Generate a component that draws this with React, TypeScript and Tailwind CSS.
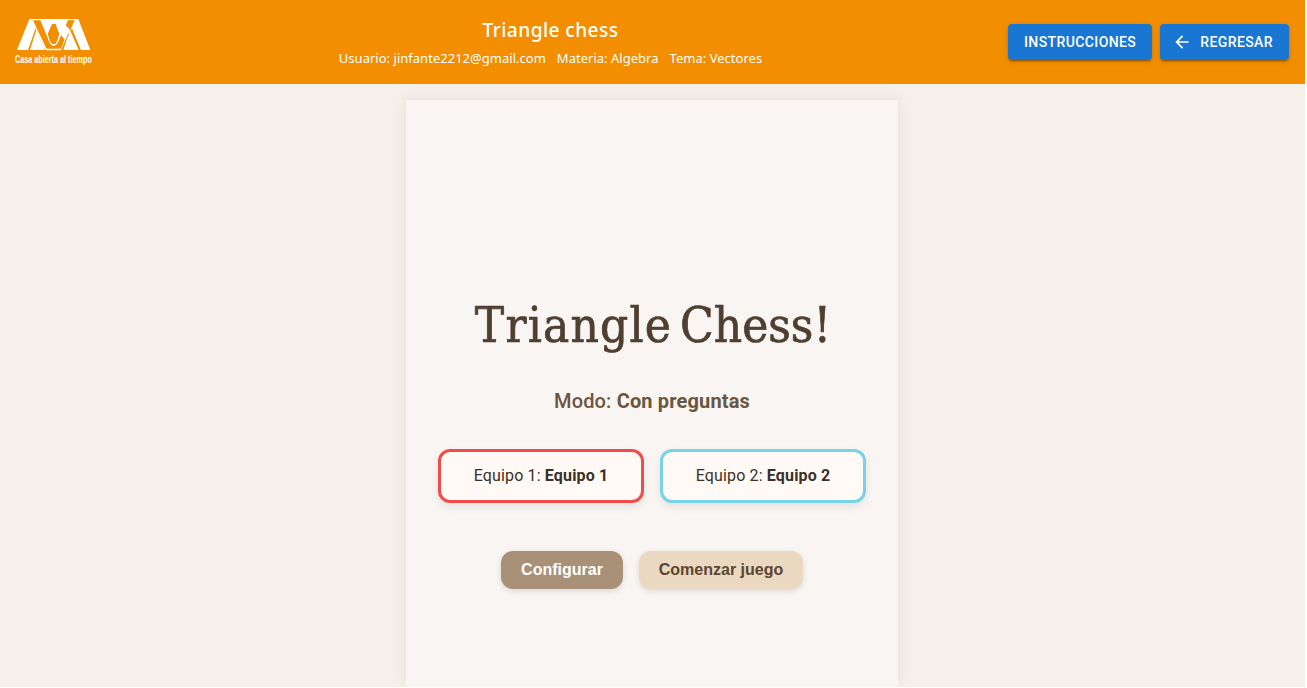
import React from "react";

function Logo() {
  return (
    <svg className="h-14 w-20 overflow-visible" viewBox="42 42 240 168" role="img" aria-label="Casa abierta al tiempo">
      <g fill="#fff">
        <path d="M88 57H99L109 79L84 150H51Z" />
        <path d="M109 91L135 150H90L100 118Z" />
        <path d="M92 57H232V62H222L188 144L182 151H140L132 144L97 62H92Z" />
        <path d="M222 57H235L271 150H242L212 84Z" />
        <path d="M210 90L236 150H190Z" />
      </g>
      <g fill="#f28e00">
        <path d="M99 61H121L147 122Q153 137 161 137Q170 137 176 122L183 106L194 118L184 144L181 146H142L138 143Z" />
        <path d="M204 61H224L211 90L197 76Z" />
        <path d="M156 71H167L178 101Q172 126 166 132H156Q148 124 143 101Z" />
      </g>
      <path d="M184 78L206 122" stroke="#fff" strokeWidth="13" />
      <path d="M206 101L186 147" stroke="#f28e00" strokeWidth="3" />
      <path d="M215 88L240 149" stroke="#f28e00" strokeWidth="4" />
      <path d="M155 69H168L180 101Q174 128 167 134H155Q147 126 141 101Z" fill="none" stroke="#fff" strokeWidth="3" />
      <text transform="translate(45 189) scale(0.725 1)" fill="#fff" fontFamily="Liberation Sans" fontWeight="700" fontSize="30">Casa abierta al tiempo</text>
    </svg>
  );
}

const actionButton =
  "flex h-9 items-center rounded bg-[#1976d2] px-4 font-[Roboto,sans-serif] text-sm font-medium tracking-[0.4px] text-white shadow-[0_3px_1px_-2px_rgba(0,0,0,0.2),0_2px_2px_0_rgba(0,0,0,0.14),0_1px_5px_0_rgba(0,0,0,0.12)]";

function Header() {
  return (
    <header className="flex h-[84px] shrink-0 items-center bg-[#f28e00] pl-[14px] pr-4">
      <div className="w-20"><Logo /></div>
      <div className="flex flex-1 flex-col items-center pr-[1px] text-white font-['Noto_Sans',sans-serif]">
        <h1 className="text-[19.2px] font-medium leading-7 tracking-[0.4px]">Triangle chess</h1>
        <div className="mt-1 flex gap-[11px] whitespace-nowrap text-[13px] leading-5 tracking-[0.02px]">
          <span>Usuario: jinfante2212@gmail.com</span>
          <span>Materia: Algebra</span>
          <span>Tema: Vectores</span>
        </div>
      </div>
      <div className="flex gap-2">
        <button className={actionButton}>INSTRUCCIONES</button>
        <button className={actionButton}>
          <svg className="-ml-1 mr-2 size-5" viewBox="0 0 24 24" fill="currentColor">
            <path d="M20 11H7.83l5.59-5.59L12 4l-8 8 8 8 1.41-1.41L7.83 13H20z" />
          </svg>
          REGRESAR
        </button>
      </div>
    </header>
  );
}

function Team({ label, name, border }: { label: string; name: string; border: string }) {
  return (
    <div className={`flex h-[54px] w-[206px] items-center justify-center rounded-xl border-[3px] bg-[#fffaf5] text-base tracking-[0.15px] text-[#3b3028] shadow-[0_4px_8px_rgba(0,0,0,0.08)] ${border}`}>
      <span>{label}: <strong className="font-bold">{name}</strong></span>
    </div>
  );
}

export default function App() {
  return (
    <div className="h-[688px] overflow-hidden bg-white pb-px pr-0.5">
      <div className="flex h-full flex-col overflow-hidden bg-[#f5f0ea]">
        <Header />
        <div className="flex flex-1 justify-center pr-px pt-4">
          <main className="flex w-[492px] flex-col items-center bg-[#f9f5f2] pt-[186px] font-[Roboto,sans-serif] shadow-[0_0_15px_rgba(0,0,0,0.08)]">
            <h2 className="h-[76px] whitespace-nowrap pl-0.5 pt-0.5 font-['DejaVu_Serif_Condensed','DejaVu_Serif',serif] text-[49px] leading-[76px] text-[#4e3f31] [-webkit-text-stroke:0.7px_#4e3f31] [word-spacing:-6px]">
              <span className="tracking-[1.2px]">Triangle</span> Chess!
            </h2>
            <p className="mt-[25px] text-xl leading-7 tracking-[0.15px] text-[#6b5640]"><span className="font-medium">Modo: </span><strong>Con preguntas</strong></p>
            <div className="mt-[34px] flex gap-4">
              <Team label="Equipo 1" name="Equipo 1" border="border-[#f24b4c]" />
              <Team label="Equipo 2" name="Equipo 2" border="border-[#78d2e8]" />
            </div>
            <div className="mt-12 flex gap-4 font-['Liberation_Sans',sans-serif] text-base font-bold">
              <button className="h-[38px] w-[122px] rounded-xl bg-[#a89176] text-white shadow-[0_2px_6px_rgba(0,0,0,0.12)]">Configurar</button>
              <button className="h-[38px] w-[164px] rounded-xl bg-[#ead8c0] text-[#5a4632] shadow-[0_2px_6px_rgba(0,0,0,0.12)]">Comenzar juego</button>
            </div>
          </main>
        </div>
      </div>
    </div>
  );
}
